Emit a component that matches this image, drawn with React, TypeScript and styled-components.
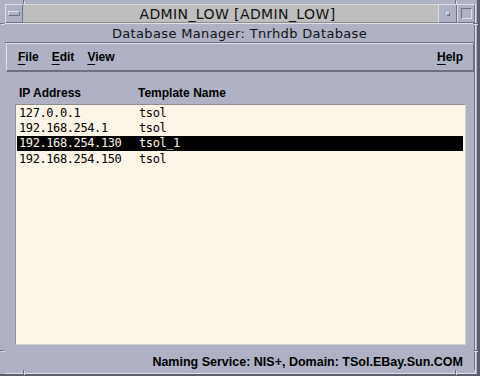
import React from "react";
import styled, { createGlobalStyle } from "styled-components";

const Global = createGlobalStyle`
  html, body { margin: 0; padding: 0; background: #aeb2c4; }
  #root { width: 480px; height: 376px; }
`;

const C = {
  bg: "#aeb2c4",
  title: "#bebebe",
  light: "#dfe1ea",
  dark: "#6e7182",
  edge: "#5c5e6c",
  list: "#fdf5e8",
};

const Window = styled.div`
  position: relative;
  width: 480px;
  height: 376px;
  box-sizing: border-box;
  background: ${C.bg};
  border-right: 3px solid ${C.edge};
  border-bottom: 2px solid ${C.edge};
  display: flex;
  flex-direction: column;
  padding: 4px 1px 0 5px;
  font-family: "Liberation Sans", Arial, sans-serif;
  color: #000;
`;

const Frame = styled.div`
  flex: 1;
  display: flex;
  flex-direction: column;
  border-right: 1px solid ${C.light};
  border-bottom: 1px solid ${C.light};
  padding-bottom: 3px;
`;

const TitleRow = styled.div`
  display: flex;
  height: 19px;
  border-bottom: 1px solid ${C.light};
`;

const TitleButton = styled.div<{ $w?: number }>`
  width: ${(p) => p.$w ?? 18}px;
  height: 19px;
  box-sizing: border-box;
  background: ${C.bg};
  border-top: 1px solid ${C.light};
  border-left: 1px solid ${C.light};
  border-right: 1px solid ${C.dark};
  border-bottom: 1px solid ${C.dark};
  display: flex;
  align-items: center;
  justify-content: center;
`;

const MenuGlyph = styled.div`
  width: 10px;
  height: 3px;
  background: ${C.bg};
  border-top: 1px solid ${C.light};
  border-left: 1px solid ${C.light};
  border-right: 1px solid ${C.dark};
  border-bottom: 1px solid ${C.dark};
`;

const MinGlyph = styled.div`
  width: 2px;
  height: 2px;
  background: ${C.bg};
  border-top: 1px solid ${C.light};
  border-left: 1px solid ${C.light};
  border-right: 1px solid ${C.dark};
  border-bottom: 1px solid ${C.dark};
`;

const MaxGlyph = styled.div`
  width: 9px;
  height: 9px;
  border-top: 1px solid ${C.dark};
  border-left: 1px solid ${C.dark};
  border-right: 1px solid ${C.light};
  border-bottom: 1px solid ${C.light};
`;

const TitleText = styled.div`
  flex: 1;
  height: 19px;
  background: ${C.title};
  box-sizing: border-box;
  border-top: 1px solid #d8d8d8;
  border-bottom: 1px solid #8e8e8e;
  display: flex;
  align-items: center;
  justify-content: center;
  padding-left: 14px;
  font-family: "DejaVu Sans", sans-serif;
  font-size: 14px;
  letter-spacing: 0.4px;
  color: #111;
`;

const Client = styled.div`
  flex: 1;
  display: flex;
  flex-direction: column;
  border-right: 1px solid ${C.dark};
`;

const Subtitle = styled.div`
  height: 18px;
  display: flex;
  align-items: center;
  justify-content: center;
  font-family: "DejaVu Sans", sans-serif;
  font-size: 13px;
  letter-spacing: 0.35px;
  color: #111;
  border-bottom: 1px solid ${C.dark};
`;

const MenuBar = styled.div`
  height: 29px;
  margin-left: 1px;
  box-sizing: border-box;
  border-top: 1px solid ${C.light};
  border-left: 1px solid ${C.light};
  border-bottom: 2px solid ${C.dark};
  border-right: 1px solid ${C.dark};
  display: flex;
  align-items: center;
  padding: 0 10px 0 11px;
  gap: 13px;
`;

const MenuItem = styled.span<{ $right?: boolean }>`
  font-weight: bold;
  font-size: 12px;
  margin-left: ${(p) => (p.$right ? "auto" : "0")};
  & u {
    text-decoration: underline;
    text-decoration-thickness: 1px;
    text-underline-offset: 3px;
  }
`;

const Body = styled.div`
  flex: 1;
  display: flex;
  flex-direction: column;
  padding: 10px 8px 0 10px;
`;

const HeaderRow = styled.div`
  display: flex;
  height: 21px;
  align-items: center;
  padding-left: 4px;
  font-weight: bold;
  font-size: 12px;
  margin-bottom: 1px;
`;

const HeaderCell = styled.span<{ $w?: number }>`
  width: ${(p) => (p.$w ? `${p.$w}px` : "auto")};
`;

const ListBox = styled.div`
  height: 241px;
  box-sizing: border-box;
  background: ${C.list};
  border-top: 1px solid #8e8e8e;
  border-left: 1px solid #8e8e8e;
  border-right: 1px solid #d4d0c8;
  border-bottom: 1px solid #d4d0c8;
  padding: 0 2px 0 1px;
`;

const Row = styled.div<{ $sel?: boolean }>`
  display: flex;
  height: 15.4px;
  align-items: center;
  padding-left: 2px;
  background: ${(p) => (p.$sel ? "#000" : "transparent")};
  color: ${(p) => (p.$sel ? "#fdf5e8" : "#000")};
  font-family: "DejaVu Sans Mono", monospace;
  font-size: 12px;
  letter-spacing: -0.4px;
  white-space: pre;
`;

const Cell = styled.span<{ $w?: number }>`
  width: ${(p) => (p.$w ? `${p.$w}px` : "auto")};
`;

const Status = styled.div`
  flex: 1;
  display: flex;
  align-items: center;
  justify-content: flex-end;
  padding-right: 3px;
  padding-top: 9px;
  font-weight: bold;
  font-size: 12.5px;
`;

const Tick = styled.div<{ $v?: boolean }>`
  position: absolute;
  background: ${C.dark};
  box-shadow: 1px 1px 0 ${C.light};
  width: ${(p) => (p.$v ? "1px" : "4px")};
  height: ${(p) => (p.$v ? "4px" : "1px")};
`;

const rows = [
  ["127.0.0.1", "tsol"],
  ["192.168.254.1", "tsol"],
  ["192.168.254.130", "tsol_1"],
  ["192.168.254.150", "tsol"],
];

export default function App() {
  return (
    <>
      <Global />
      <Window>
        <Frame>
          <TitleRow>
            <TitleButton>
              <MenuGlyph />
            </TitleButton>
            <TitleText>ADMIN_LOW [ADMIN_LOW]</TitleText>
            <TitleButton $w={19}>
              <MinGlyph />
            </TitleButton>
            <TitleButton>
              <MaxGlyph />
            </TitleButton>
          </TitleRow>
          <Client>
            <Subtitle>Database Manager: Tnrhdb Database</Subtitle>
            <MenuBar>
              <MenuItem>
                <u>F</u>ile
              </MenuItem>
              <MenuItem>
                <u>E</u>dit
              </MenuItem>
              <MenuItem>
                <u>V</u>iew
              </MenuItem>
              <MenuItem $right>
                <u>H</u>elp
              </MenuItem>
            </MenuBar>
            <Body>
              <HeaderRow>
                <HeaderCell $w={119}>IP Address</HeaderCell>
                <HeaderCell>Template Name</HeaderCell>
              </HeaderRow>
              <ListBox>
                {rows.map(([ip, t], i) => (
                  <Row key={ip} $sel={i === 2}>
                    <Cell $w={120}>{ip}</Cell>
                    <Cell>{t}</Cell>
                  </Row>
                ))}
              </ListBox>
              <Status>Naming Service: NIS+, Domain: TSol.EBay.Sun.COM</Status>
            </Body>
          </Client>
        </Frame>
        <Tick $v style={{ left: 23, top: 0 }} />
        <Tick style={{ left: 0, top: 23 }} />
        <Tick $v style={{ left: 455, top: 0 }} />
        <Tick style={{ right: 0, top: 23 }} />
        <Tick $v style={{ left: 23, bottom: 0 }} />
        <Tick style={{ left: 0, bottom: 23 }} />
        <Tick $v style={{ left: 455, bottom: 0 }} />
        <Tick style={{ right: 0, bottom: 23 }} />
      </Window>
    </>
  );
}
